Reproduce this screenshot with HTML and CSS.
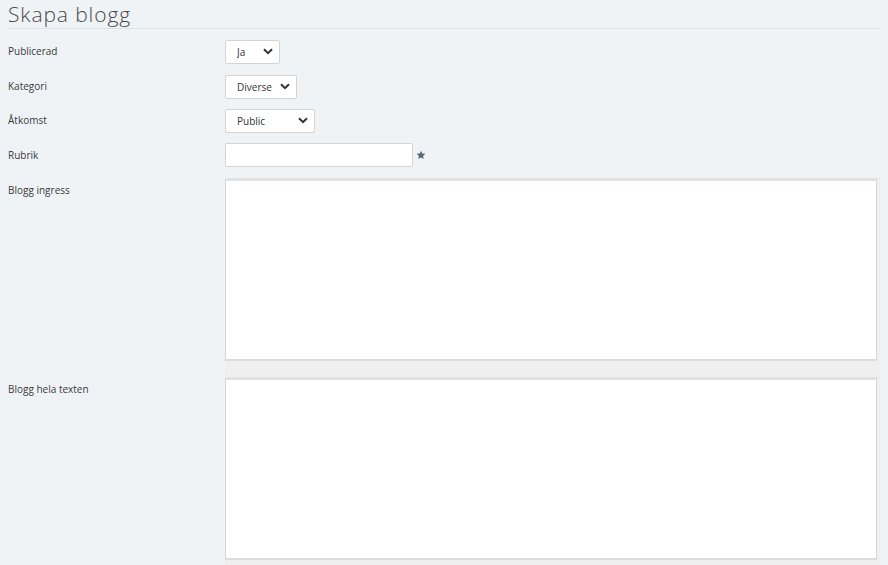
FILE: index.html
```html
<!DOCTYPE html>
<html lang="sv">
<head>
  <meta charset="UTF-8" />
  <title>Skapa blogg</title>
  <link rel="stylesheet" href="styles.css">
</head>
<body>
  <h1>Skapa blogg</h1>

  <form class="blogg-form">
    <div class="rad">
      <label>Publicerad</label>
      <span class="val" style="width:55px">
        <select><option>Ja</option><option>Nej</option></select>
        <svg class="pil" viewBox="0 0 10 7" width="10" height="7"><path d="M1 1.2 L5 5.2 L9 1.2" fill="none" stroke="#333" stroke-width="2"/></svg>
      </span>
    </div>
    <div class="rad">
      <label>Kategori</label>
      <span class="val" style="width:72px">
        <select><option>Diverse</option></select>
        <svg class="pil" viewBox="0 0 10 7" width="10" height="7"><path d="M1 1.2 L5 5.2 L9 1.2" fill="none" stroke="#333" stroke-width="2"/></svg>
      </span>
    </div>
    <div class="rad">
      <label>Åtkomst</label>
      <span class="val" style="width:90px">
        <select><option>Public</option><option>Private</option></select>
        <svg class="pil" viewBox="0 0 10 7" width="10" height="7"><path d="M1 1.2 L5 5.2 L9 1.2" fill="none" stroke="#333" stroke-width="2"/></svg>
      </span>
    </div>
    <div class="rad">
      <label>Rubrik</label>
      <input type="text" class="rubrik" />
      <svg class="stjarna" viewBox="0 0 24 24" width="10" height="10"><path d="M12 1.5l3.1 6.9 7.4.7-5.6 5 1.7 7.4L12 17.7l-6.6 3.8 1.7-7.4-5.6-5 7.4-.7z" fill="#5b6878"/></svg>
    </div>
    <div class="rad">
      <label>Blogg ingress</label>
      <div class="editor"><textarea></textarea></div>
    </div>
    <div class="rad">
      <label>Blogg hela texten</label>
      <div class="editor"><textarea></textarea></div>
    </div>
  </form>
</body>
</html>
```

FILE: styles.css
```css
body {
  font-family: "Open Sans", Arial, sans-serif;
  background-color: #f0f3f6;
  color: #333;
  margin: 0 8px;
}
h1 {
  font-family: "Open Sans", sans-serif;
  font-weight: 300;
  font-size: 21px;
  line-height: 24px;
  letter-spacing: 0.9px;
  color: #4a4a4a;
  margin: 0;
  padding: 2px 0 2px;
  border-bottom: 1px solid #dde1e5;
}
.blogg-form {
  padding-top: 10px;
}
.rad {
  display: flex;
  align-items: flex-start;
  margin-bottom: 10.7px;
}
label {
  width: 217px;
  flex-shrink: 0;
  font-size: 10px;
  line-height: 14px;
  padding-top: 5px;
  color: #3a3a3a;
}
.val {
  position: relative;
  display: inline-block;
  height: 24px;
}
select {
  appearance: none;
  -webkit-appearance: none;
  width: 100%;
  height: 24px;
  background: #fff;
  border: 1px solid #d4d4d4;
  border-radius: 2px;
  font-family: "Open Sans", sans-serif;
  font-size: 10px;
  color: #333;
  padding: 0 0 0 11px;
  margin: 0;
}
.pil {
  position: absolute;
  right: 7px;
  top: 9px;
  pointer-events: none;
}
.rubrik {
  width: 188px;
  height: 24px;
  box-sizing: border-box;
  border: 1px solid #d4d4d4;
  border-radius: 2px;
  background: #fff;
  margin: 0;
}
.stjarna {
  margin: 7px 0 0 3px;
}
.editor {
  flex: 1;
  background: #efefef;
  border-top: 1px solid #e2e2e2;
  padding: 0 3px 16px 0;
  margin-bottom: -10.7px;
}
.editor textarea {
  display: block;
  width: 100%;
  height: 182px;
  box-sizing: border-box;
  border: 1px solid #d6d6d6;
  border-top: 2px solid #e0e0e0;
  border-bottom: 2px solid #dcdcdc;
  background: #fff;
  resize: none;
  margin: 0;
}
```
